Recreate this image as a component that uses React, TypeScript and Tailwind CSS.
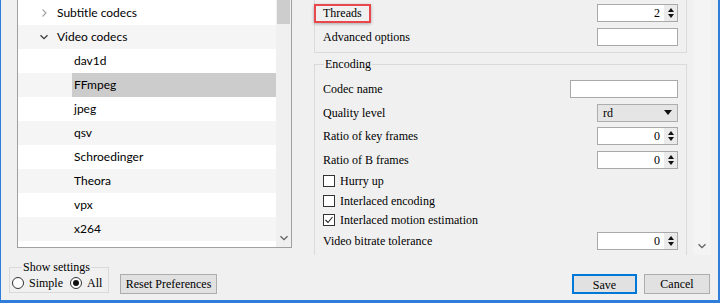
import React from "react";

const treeRows = [
  { label: "Subtitle codecs", level: 0, open: false },
  { label: "Video codecs", level: 0, open: true },
  { label: "dav1d", level: 1 },
  { label: "FFmpeg", level: 1, selected: true },
  { label: "jpeg", level: 1 },
  { label: "qsv", level: 1 },
  { label: "Schroedinger", level: 1 },
  { label: "Theora", level: 1 },
  { label: "vpx", level: 1 },
  { label: "x264", level: 1 },
];

function ChevronRight() {
  return (
    <svg width="8" height="8" viewBox="0 0 8 8">
      <polyline points="2.5,0.5 6,4 2.5,7.5" fill="none" stroke="#a6a6a6" strokeWidth="1.2" />
    </svg>
  );
}

function ChevronDown({ color = "#3c3c3c" }: { color?: string }) {
  return (
    <svg width="8" height="6" viewBox="0 0 8 6">
      <polyline points="0.5,1.2 4,4.7 7.5,1.2" fill="none" stroke={color} strokeWidth="1.3" />
    </svg>
  );
}

function SpinBox({ value }: { value: string }) {
  return (
    <div className="w-[81px] h-[18px] border border-[#a9a9a9] bg-white flex">
      <div className="flex-1 text-right pr-[4px] leading-[16px]">{value}</div>
      <div className="w-[13px] bg-[#ebebeb] flex flex-col items-center justify-center gap-[2px]">
        <svg width="6" height="4" viewBox="0 0 6 4">
          <polygon points="3,0 6,4 0,4" fill="#111" />
        </svg>
        <svg width="6" height="4" viewBox="0 0 6 4">
          <polygon points="0,0 6,0 3,4" fill="#111" />
        </svg>
      </div>
    </div>
  );
}

function TextBox({ width }: { width: string }) {
  return <div className={`h-[18px] border border-[#a9a9a9] bg-white ${width}`} />;
}

function CheckBox({ label, checked }: { label: string; checked?: boolean }) {
  return (
    <div className="flex items-center gap-[5px]">
      <div className="w-[12px] h-[12px] border border-[#333] bg-white flex items-center justify-center">
        {checked && (
          <svg width="10" height="10" viewBox="0 0 10 10">
            <polyline points="1.5,5 4,7.5 8.5,2" fill="none" stroke="#222" strokeWidth="1.1" />
          </svg>
        )}
      </div>
      <span>{label}</span>
    </div>
  );
}

function Radio({ label, checked }: { label: string; checked?: boolean }) {
  return (
    <div className="flex items-center gap-[5px]">
      <div className="w-[12px] h-[12px] rounded-full border border-[#333] bg-white flex items-center justify-center">
        {checked && <div className="w-[6px] h-[6px] rounded-full bg-[#111]" />}
      </div>
      <span>{label}</span>
    </div>
  );
}

export default function App() {
  return (
    <div className="w-[720px] h-[303px] bg-[#f0f0f0] border-l border-r-2 border-b-[3px] border-[#2f7dd8] flex flex-col overflow-hidden font-['Liberation_Serif',serif] text-[12px] text-black">
      {/* Main area */}
      <div className="h-[255px] flex overflow-hidden">
        {/* Category tree */}
        <div className="ml-[16px] w-[275px] h-[248px] border-x border-b border-[#a0a0a0] bg-white flex shrink-0">
          <div className="flex-1 pt-px font-['Lato',sans-serif]">
            {treeRows.map((row, i) => (
              <div
                key={row.label}
                className={`h-[24px] flex items-center ${i % 2 === 0 ? "bg-white" : "bg-[#f5f5f5]"}`}
              >
                {row.level === 0 ? (
                  <div className="flex items-center pl-[22px]">
                    {row.open ? <ChevronDown /> : <ChevronRight />}
                    <span className="ml-[9px]">{row.label}</span>
                  </div>
                ) : (
                  <div
                    className={`ml-[54px] flex-1 h-full flex items-center pl-[2px] ${row.selected ? "bg-[#cccccc]" : ""}`}
                  >
                    {row.label}
                  </div>
                )}
              </div>
            ))}
          </div>
          <div className="w-[15px] bg-[#f0f0f0] flex flex-col items-center">
            <div className="w-[13px] h-[24px] bg-[#cdcdcd]" />
            <div className="flex-1" />
            <div className="mb-[6px]">
              <ChevronDown color="#606060" />
            </div>
          </div>
        </div>

        {/* Settings panel */}
        <div className="flex-1 flex">
          <div className="pl-[22px] w-[395px] flex flex-col shrink-0">
            <div className="border-x border-b border-[#dadada] px-[8px] pt-px pb-[3px]">
              <div className="h-[24px] flex items-center justify-between">
                <span className="-ml-[9px] pl-[7px] pr-[7px] h-[19px] flex items-center border-2 border-[#e8484b] shadow-[0_1px_3px_rgba(0,0,0,0.3)]">
                  Threads
                </span>
                <SpinBox value="2" />
              </div>
              <div className="h-[24px] flex items-center justify-between">
                <span>Advanced options</span>
                <TextBox width="w-[81px]" />
              </div>
            </div>

            <fieldset className="mt-[4px] border border-[#dadada] px-[8px] pt-[6px]">
              <legend className="ml-[1px] px-[1px] leading-[14px]">Encoding</legend>
              <div className="h-[24px] flex items-center justify-between">
                <span>Codec name</span>
                <TextBox width="w-[108px]" />
              </div>
              <div className="h-[23px] flex items-center justify-between">
                <span>Quality level</span>
                <div className="w-[81px] h-[18px] border border-[#adadad] bg-[#e5e5e5] flex items-center justify-between pl-[5px] pr-[5px]">
                  <span>rd</span>
                  <svg width="8" height="5" viewBox="0 0 8 5">
                    <polygon points="0,0 8,0 4,5" fill="#111" />
                  </svg>
                </div>
              </div>
              <div className="h-[24px] flex items-center justify-between">
                <span>Ratio of key frames</span>
                <SpinBox value="0" />
              </div>
              <div className="h-[23px] flex items-center justify-between">
                <span>Ratio of B frames</span>
                <SpinBox value="0" />
              </div>
              <div className="h-[20px] flex items-center">
                <CheckBox label="Hurry up" />
              </div>
              <div className="h-[19px] flex items-center">
                <CheckBox label="Interlaced encoding" />
              </div>
              <div className="h-[19px] flex items-center">
                <CheckBox label="Interlaced motion estimation" checked />
              </div>
              <div className="h-[24px] flex items-center justify-between">
                <span>Video bitrate tolerance</span>
                <SpinBox value="0" />
              </div>
              <div className="h-[24px]" />
            </fieldset>
          </div>
          <div className="ml-[6px] w-[18px] bg-[#f4f4f4] flex flex-col justify-end items-center pb-[6px]">
            <ChevronDown color="#606060" />
          </div>
        </div>
      </div>

      {/* Bottom bar */}
      <div className="flex-1 flex items-start pl-[8px] pr-[8px]">
        <fieldset className="mt-[5px] w-[100px] border border-[#dadada] px-[2px]">
          <legend className="ml-[10px] px-[1px] leading-[14px]">Show settings</legend>
          <div className="h-[18px] flex items-center gap-[7px]">
            <Radio label="Simple" />
            <Radio label="All" checked />
          </div>
        </fieldset>
        <button className="ml-[11px] mt-[19px] w-[97px] h-[20px] border border-[#adadad] bg-[#e1e1e1]">
          Reset Preferences
        </button>
        <button className="ml-auto mt-[19px] w-[65px] h-[20px] border-2 border-[#0078d7] bg-[#e1e1e1]">
          Save
        </button>
        <button className="ml-[7px] mt-[19px] w-[66px] h-[20px] border border-[#adadad] bg-[#e1e1e1]">
          Cancel
        </button>
      </div>
    </div>
  );
}
